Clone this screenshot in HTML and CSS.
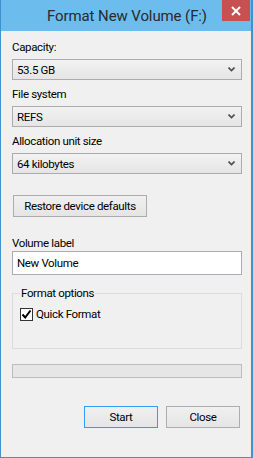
FILE: index.html
```html
<!DOCTYPE html>
<html lang="en">
  <head>
    <meta charset="UTF-8" />
    <meta name="viewport" content="width=device-width, initial-scale=1.0" />
    <title>Format New Volume (F:)</title>
    <link rel="stylesheet" href="styles.css">
  </head>
  <body>
    <div class="window">
      <div class="titlebar">
        <span class="title">Format New Volume (F:)</span>
        <span class="close">
          <svg width="10" height="10" viewBox="0 0 10 10">
            <path d="M1 1 L9 9 M9 1 L1 9" stroke="#fff" stroke-width="2" />
          </svg>
        </span>
      </div>

      <div class="content">
        <div class="field">
          <label>Capacity:</label>
          <div class="select">
            <span>53.5 GB</span>
            <svg class="chevron" width="7" height="5" viewBox="0 0 7 5">
              <path d="M0.5 0.5 L3.5 3.5 L6.5 0.5" stroke="#4d4d4d" stroke-width="1.6" fill="none" />
            </svg>
          </div>
        </div>

        <div class="field">
          <label>File system</label>
          <div class="select">
            <span>REFS</span>
            <svg class="chevron" width="7" height="5" viewBox="0 0 7 5">
              <path d="M0.5 0.5 L3.5 3.5 L6.5 0.5" stroke="#4d4d4d" stroke-width="1.6" fill="none" />
            </svg>
          </div>
        </div>

        <div class="field">
          <label>Allocation unit size</label>
          <div class="select">
            <span>64 kilobytes</span>
            <svg class="chevron" width="7" height="5" viewBox="0 0 7 5">
              <path d="M0.5 0.5 L3.5 3.5 L6.5 0.5" stroke="#4d4d4d" stroke-width="1.6" fill="none" />
            </svg>
          </div>
        </div>

        <button class="btn restore">Restore device defaults</button>

        <div class="field volume">
          <label>Volume label</label>
          <div class="textbox">New Volume</div>
        </div>

        <fieldset class="options">
          <legend>Format options</legend>
          <div class="check-row">
            <span class="checkbox">
              <svg width="11" height="11" viewBox="0 0 11 11">
                <path d="M1.5 5.5 L4.2 8.5 L9.5 1.5" stroke="#000" stroke-width="2" fill="none" />
              </svg>
            </span>
            <span>Quick Format</span>
          </div>
        </fieldset>

        <div class="progress"></div>

        <div class="actions">
          <button class="btn primary">Start</button>
          <button class="btn">Close</button>
        </div>
      </div>
    </div>
  </body>
</html>
```

FILE: styles.css
```css
body {
  margin: 0;
  font-family: Roboto, "Open Sans", sans-serif;
  font-size: 11.5px;
  letter-spacing: -0.35px;
  color: #000;
}

.window {
  width: 250px;
  height: 457px;
  background-color: #f0f0f0;
  border-left: 1px solid #3f93cc;
  border-right: 2px solid #3f93cc;
  border-bottom: 1px solid #3f93cc;
}

.titlebar {
  position: relative;
  height: 31px;
  background-color: #6cbcee;
  display: flex;
  align-items: center;
  justify-content: center;
}

.title {
  font-size: 15px;
  letter-spacing: -0.1px;
  color: #2a2a2a;
  margin-left: 2px;
}

.close {
  position: absolute;
  top: 0;
  right: 1px;
  width: 28px;
  height: 21px;
  background-color: #c75050;
  display: flex;
  align-items: center;
  justify-content: center;
}

.content {
  padding: 8px 9px 0 11px;
}

.field {
  margin-bottom: 6px;
}

.field label {
  display: block;
  height: 16px;
  line-height: 16px;
  margin-bottom: 4px;
}

.select {
  height: 19px;
  border: 1px solid #acacac;
  background: linear-gradient(#f2f2f2, #e5e5e5);
  display: flex;
  align-items: center;
  justify-content: space-between;
  padding: 0 6px 0 4px;
}

.btn {
  font-family: inherit;
  font-size: 11.5px;
  letter-spacing: -0.35px;
  color: #000;
  height: 22px;
  border: 1px solid #adadad;
  background: linear-gradient(#f0f0f0, #e5e5e5);
  padding: 0;
}

.restore {
  display: block;
  width: 134px;
  margin: 21px 0 0 1px;
}

.volume {
  margin-top: 18px;
}

.volume label {
  margin-bottom: 0;
}

.textbox {
  height: 22px;
  line-height: 22px;
  border: 1px solid #abadb3;
  background-color: #fff;
  padding-left: 4px;
}

.options {
  margin: 11px 0 0 0;
  height: 63px;
  border: 1px solid #dcdcdc;
  padding: 0 7px;
  box-sizing: border-box;
}

.options legend {
  padding: 0 1px;
  line-height: 14px;
}

.check-row {
  display: flex;
  align-items: center;
  margin-top: 7px;
}

.checkbox {
  width: 11px;
  height: 11px;
  border: 1px solid #333;
  background-color: #fff;
  margin-right: 3px;
  display: flex;
}

.progress {
  margin-top: 15px;
  height: 12px;
  border: 1px solid #bcbcbc;
  background-color: #e6e6e6;
}

.actions {
  display: flex;
  justify-content: flex-end;
  gap: 8px;
  margin: 28px 2px 0 0;
}

.actions .btn {
  width: 74px;
}

.primary {
  border-color: #3399ff;
}
```
